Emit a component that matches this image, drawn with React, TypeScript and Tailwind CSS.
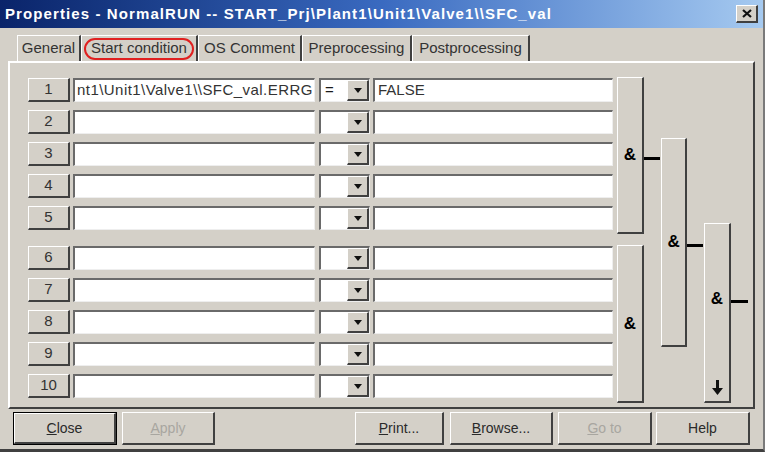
import React from "react";

const raised =
  "bg-[#d4d0c8] border-t border-l border-t-white border-l-white border-b-2 border-r-2 border-b-[#404040] border-r-[#404040]";
const sunken =
  "bg-white border-t-2 border-l-2 border-t-[#6a6a6a] border-l-[#6a6a6a] border-b border-r border-b-[#eeeeee] border-r-[#eeeeee]";

const rows = [
  { n: 1, expr: "nt1\\Unit1\\Valve1\\\\SFC_val.ERRG", op: "=", value: "FALSE" },
  { n: 2 },
  { n: 3 },
  { n: 4 },
  { n: 5 },
  { n: 6 },
  { n: 7 },
  { n: 8 },
  { n: 9 },
  { n: 10 },
];

function DropArrow() {
  return (
    <svg width="8" height="5" viewBox="0 0 8 5">
      <polygon points="0,0 8,0 4,5" fill="#111" />
    </svg>
  );
}

function Row({ n, expr, op, value }: { n: number; expr?: string; op?: string; value?: string }) {
  return (
    <div className="flex h-[24px]">
      <div className={`${raised} w-[42px] flex items-center justify-center text-[#333]`}>{n}</div>
      <div
        className={`${sunken} ml-[3px] w-[242px] flex items-center pl-[2px] overflow-hidden whitespace-nowrap tracking-[0.45px] text-[#333]`}
      >
        {expr}
      </div>
      <div className={`${sunken} ml-[4px] w-[51px] flex items-center justify-between`}>
        <span className="pl-[4px]">{op}</span>
        <div className={`${raised} w-[22px] h-full flex items-center justify-center`}>
          <DropArrow />
        </div>
      </div>
      <div className={`${sunken} ml-[3px] w-[240px] flex items-center pl-[3px] text-[#333]`}>{value}</div>
    </div>
  );
}

function Gate({ h, dash, arrow }: { h: string; dash?: boolean; arrow?: boolean }) {
  return (
    <div className="flex items-center">
      <div className={`${raised} w-[27px] ${h} flex flex-col items-center`}>
        <div className="flex-1 flex items-center justify-center font-bold text-[17px] text-black">&amp;</div>
        {arrow && (
          <div className="h-[28px] w-full flex items-center justify-center">
            <svg width="11" height="15" viewBox="0 0 11 15">
              <rect x="4" y="0" width="3" height="9" fill="#111" />
              <polygon points="0,8 11,8 5.5,15" fill="#111" />
            </svg>
          </div>
        )}
      </div>
      {dash && <div className={`h-[3px] bg-black ${arrow ? "w-[17px] -mt-[24px]" : "w-[16px] mt-[6px]"}`} />}
    </div>
  );
}

function BottomButton({
  label,
  u,
  w,
  disabled,
  focus,
  className = "",
}: {
  label: string;
  u?: number;
  w: string;
  disabled?: boolean;
  focus?: boolean;
  className?: string;
}) {
  const text =
    u === undefined ? (
      label
    ) : (
      <>
        {label.slice(0, u)}
        <span className="underline">{label[u]}</span>
        {label.slice(u + 1)}
      </>
    );
  return (
    <div
      className={`${w} h-[33px] flex items-center justify-center ${className} ${
        focus ? "border border-black" : ""
      }`}
    >
      <div
        className={`${raised} w-full h-full flex items-center justify-center ${
          disabled ? "text-[#a8a6a0]" : "text-[#2a2a2a]"
        }`}
      >
        {text}
      </div>
    </div>
  );
}

const tabs = [
  { label: "General", w: "w-[64px]" },
  { label: "Start condition", w: "w-[117px]", active: true },
  { label: "OS Comment", w: "w-[104px]" },
  { label: "Preprocessing", w: "w-[110px]" },
  { label: "Postprocessing", w: "w-[118px]" },
];

export default function App() {
  return (
    <div
      className="w-[765px] h-[452px] bg-[#d4d0c8] flex flex-col overflow-hidden border-r-2 border-r-[#7a7a7a] border-b-[3px] border-b-[#404040] text-[15px] text-[#1a1a1a]"
      style={{ fontFamily: '"Liberation Sans", Arial, sans-serif' }}
    >
      {/* title bar */}
      <div className="h-[28px] shrink-0 flex items-center justify-between pl-[5px] pr-[5px] bg-gradient-to-r from-[#0a246a] via-[#3a6ac0] to-[#a6caf0]">
        <span className="text-white font-bold text-[15px] tracking-[1.1px] whitespace-nowrap">
          Properties - NormalRUN -- START_Prj\Plant1\Unit1\Valve1\\SFC_val
        </span>
        <div className={`${raised} w-[22px] h-[18px] flex items-center justify-center`}>
          <svg width="10" height="9" viewBox="0 0 10 9">
            <path d="M1 1 L9 8 M9 1 L1 8" stroke="#111" strokeWidth="2.2" />
          </svg>
        </div>
      </div>

      {/* tabs */}
      <div className="h-[33px] shrink-0 flex items-end pl-[17px] text-[#333]">
        {tabs.map((t) => (
          <div
            key={t.label}
            className={`${t.w} h-[26px] flex items-center justify-center border-t border-l border-t-white border-l-white border-r-2 border-r-[#404040] whitespace-nowrap`}
          >
            {t.active ? (
              <span className="border-2 border-[#e02020] rounded-[11px] px-[5px] h-[22px] flex items-center">
                {t.label}
              </span>
            ) : (
              t.label
            )}
          </div>
        ))}
      </div>

      {/* panel */}
      <div className="mx-[8px] h-[348px] shrink-0 border-t-2 border-l-2 border-t-white border-l-white border-r-2 border-b-2 border-r-[#404040] border-b-[#404040] flex pt-[14px] pl-[18px]">
        <div className="flex flex-col pt-[1px]">
          <div className="flex flex-col gap-[8px]">
            {rows.slice(0, 5).map((r) => (
              <Row key={r.n} {...r} />
            ))}
          </div>
          <div className="flex flex-col gap-[8px] mt-[16px]">
            {rows.slice(5).map((r) => (
              <Row key={r.n} {...r} />
            ))}
          </div>
        </div>

        <div className="flex ml-[4px]">
          <div className="flex flex-col gap-[11px] w-[43px]">
            <Gate h="h-[157px]" dash />
            <Gate h="h-[158px]" />
          </div>
          <div className="flex flex-col w-[42px] ml-[1px] pt-[61px]">
            <Gate h="h-[209px]" dash />
          </div>
          <div className="flex flex-col ml-[1px] pt-[146px]">
            <Gate h="h-[180px]" dash arrow />
          </div>
        </div>
      </div>

      {/* buttons */}
      <div className="flex px-[13px] mt-[3px] text-[14px]">
        <BottomButton label="Close" u={0} w="w-[104px]" focus />
        <BottomButton label="Apply" u={0} w="w-[93px]" disabled className="ml-[5px]" />
        <BottomButton label="Print..." u={0} w="w-[89px]" className="ml-auto" />
        <BottomButton label="Browse..." u={0} w="w-[103px]" className="ml-[6px]" />
        <BottomButton label="Go to" u={0} w="w-[94px]" disabled className="ml-[5px]" />
        <BottomButton label="Help" w="w-[94px]" className="ml-[4px]" />
      </div>
    </div>
  );
}
